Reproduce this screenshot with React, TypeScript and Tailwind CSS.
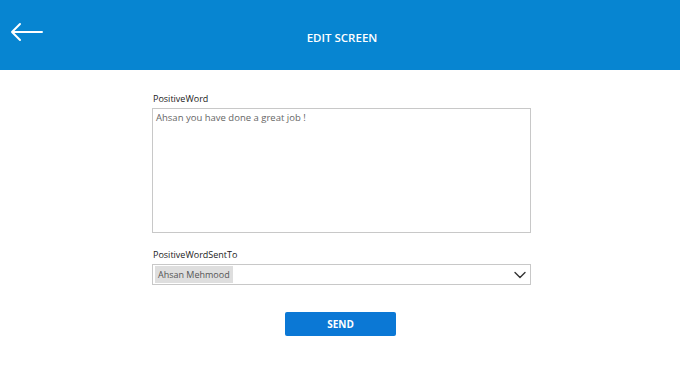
import React from "react";

export default function App() {
  return (
    <div className="w-[680px] h-[380px] bg-white font-['Open_Sans',sans-serif]">
      {/* header */}
      <div className="relative h-[70px] bg-[#0785d1] flex items-center justify-center">
        <button className="absolute left-[10px] top-[22px] text-white">
          <svg width="34" height="20" viewBox="0 0 34 20" fill="none" stroke="white" strokeWidth="2" strokeLinecap="round" strokeLinejoin="round">
            <path d="M32 10H2M10 2L2 10l8 8" />
          </svg>
        </button>
        <h1 className="text-white text-[11.5px] font-semibold mt-[6px] ml-[4px]">EDIT SCREEN</h1>
      </div>

      {/* form */}
      <div className="w-[379px] ml-[152px] pt-[22px] flex flex-col">
        <label className="text-[9px] text-[#222] leading-[14px] mb-[2px] ml-[1px]">PositiveWord</label>
        <textarea
          className="h-[125px] border border-[#c8c8c8] px-[3px] py-[2px] text-[9.5px] text-[#666] resize-none outline-none"
          defaultValue="Ahsan you have done a great job !"
        />

        <label className="text-[9px] text-[#222] leading-[14px] mt-[15px] mb-[2px] ml-[1px]">PositiveWordSentTo</label>
        <div className="h-[21px] border border-[#c8c8c8] flex items-center justify-between pl-[2px] pr-[4px]">
          <span className="bg-[#dedede] text-[9px] text-[#555] px-[3px] h-[17px] flex items-center">Ahsan Mehmood</span>
          <svg width="12" height="8" viewBox="0 0 12 8" fill="none" stroke="#333" strokeWidth="1.4" strokeLinecap="round" strokeLinejoin="round">
            <path d="M1 1.5l5 5 5-5" />
          </svg>
        </div>

        <div className="flex justify-center mt-[27px] pr-[2px]">
          <button className="w-[111px] h-[24px] rounded-[2px] bg-[#0b78d5] text-white text-[10px] font-bold">SEND</button>
        </div>
      </div>
    </div>
  );
}
